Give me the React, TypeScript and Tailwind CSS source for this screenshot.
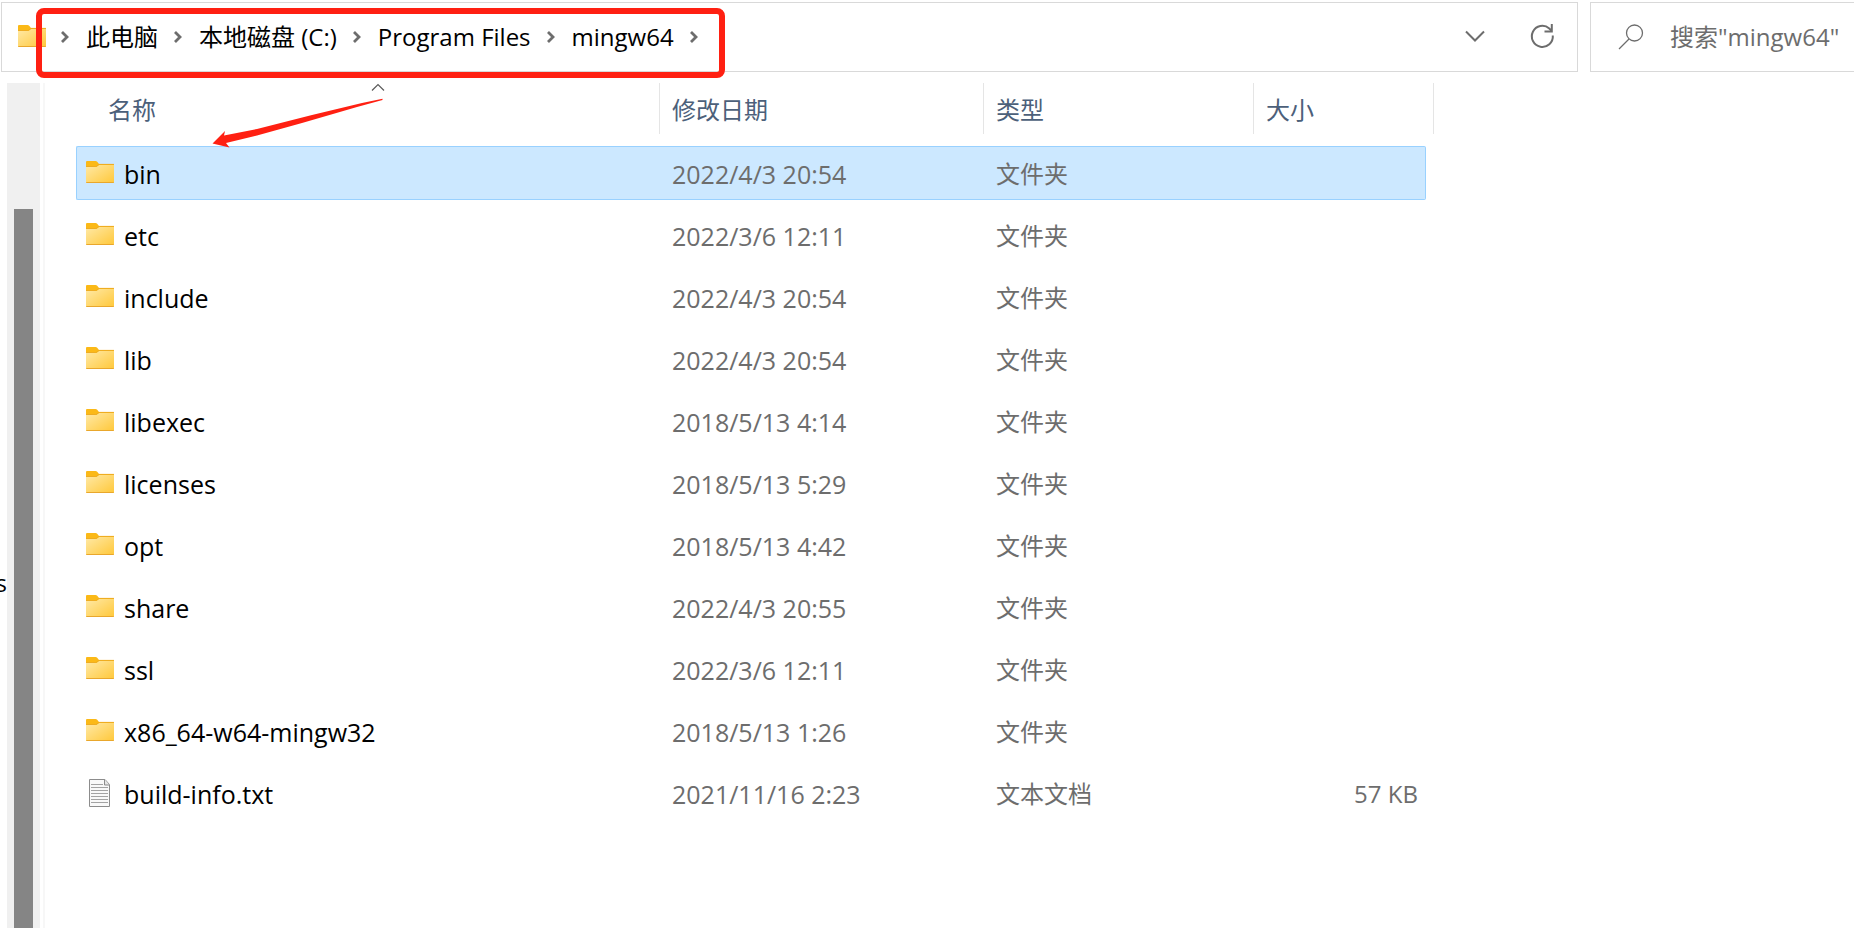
import { useState } from "react";
import clsx from "clsx";

type Entry = {
  name: string;
  modified: string;
  kind: "folder" | "text";
  size?: string;
};

const CRUMBS = ["此电脑", "本地磁盘 (C:)", "Program Files", "mingw64"];

const ENTRIES: Entry[] = [
  { name: "bin", modified: "2022/4/3 20:54", kind: "folder" },
  { name: "etc", modified: "2022/3/6 12:11", kind: "folder" },
  { name: "include", modified: "2022/4/3 20:54", kind: "folder" },
  { name: "lib", modified: "2022/4/3 20:54", kind: "folder" },
  { name: "libexec", modified: "2018/5/13 4:14", kind: "folder" },
  { name: "licenses", modified: "2018/5/13 5:29", kind: "folder" },
  { name: "opt", modified: "2018/5/13 4:42", kind: "folder" },
  { name: "share", modified: "2022/4/3 20:55", kind: "folder" },
  { name: "ssl", modified: "2022/3/6 12:11", kind: "folder" },
  { name: "x86_64-w64-mingw32", modified: "2018/5/13 1:26", kind: "folder" },
  { name: "build-info.txt", modified: "2021/11/16 2:23", kind: "text", size: "57 KB" },
];

const FolderIcon = () => (
  <svg width="28" height="24" viewBox="0 1 28 24" className="shrink-0" aria-hidden="true">
    <defs>
      <linearGradient id="folder-front" x1="0" y1="0" x2="1" y2="1">
        <stop offset="0" stopColor="#ffe9a6" />
        <stop offset="1" stopColor="#ffc83a" />
      </linearGradient>
    </defs>
    <path d="M0 2a1 1 0 0 1 1-1h8.500q1 0 1.700.8L13 4h14a1 1 0 0 1 1 1v8H0z" fill="#fbb917" />
    <path d="M0 7h10.500L13 5h15v17a1 1 0 0 1-1 1H1a1 1 0 0 1-1-1z" fill="url(#folder-front)" />
    <path d="M0 22a1 1 0 0 0 1 1h26a1 1 0 0 0 1-1z" fill="#e9a72c" />
    <path d="M0 6.500h9.500q1 0 1.700-.7L13 4.400h15" fill="none" stroke="#eeac22" />
  </svg>
);

const TextFileIcon = () => (
  <svg width="28" height="28" viewBox="0 0 28 28" className="shrink-0" aria-hidden="true">
    <path d="M3.500.5H19L23.500 5.500v22h-20z" fill="#f9f9f9" stroke="#8c8c8c" />
    <path d="M18.500.5v5.500h5" fill="#e6e6e6" stroke="#8c8c8c" />
    <path
      d="M5 5.500h12M5 8.500h17M5 11.500h17M5 14.500h17M5 17.500h17M5 20.500h17M5 23.500h17"
      stroke="#a3a3a3"
    />
  </svg>
);

const CrumbChevron = () => (
  <svg width="8" height="12" viewBox="0 0 8 12" className="shrink-0" aria-hidden="true">
    <path d="M1 1l5 5-5 5" fill="none" stroke="#6d6d6d" strokeWidth="2.800" />
  </svg>
);

const AddressBar = () => (
  <div className="flex min-w-0 flex-1 items-center border border-[#d9d9d9] pr-[22px]">
    <nav aria-label="路径" className="relative flex h-full items-center gap-[17px] pl-4">
      <div className="flex items-center gap-[15px]">
        <FolderIcon />
        <CrumbChevron />
      </div>
      {CRUMBS.map((crumb) => (
        <div key={crumb} className="flex items-center gap-4">
          <button type="button" className="whitespace-nowrap text-black">
            {crumb}
          </button>
          <CrumbChevron />
        </div>
      ))}
      {/* highlight around the path */}
      <span className="pointer-events-none absolute -right-[27px] -bottom-[7px] left-[34px] top-[5px] rounded-lg border-[6px] border-[#ff2012]" />
    </nav>
    <div className="ml-auto flex items-center gap-[42px] pb-[3px]">
      <button type="button" aria-label="以前的位置">
        <svg width="24" height="24" viewBox="0 0 24 24" fill="none" stroke="#6d6d6d" strokeWidth="2">
          <path d="M3 7.500l9 9 9-9" />
        </svg>
      </button>
      <button type="button" aria-label="刷新">
        <svg width="26" height="26" viewBox="0 0 26 26" fill="none" stroke="#6d6d6d" strokeWidth="2">
          <path d="M23.800 12.500A10.500 10.500 0 1 1 20.300 5.500L22.500 7.800" />
          <path d="M22.800 1v7.500H15.500" />
        </svg>
      </button>
    </div>
  </div>
);

const SearchBox = () => (
  <label className="flex w-[264px] shrink-0 items-center gap-[26px] border border-r-0 border-[#d9d9d9] pl-[27px]">
    <svg width="26" height="26" viewBox="0 0 26 26" fill="none" stroke="#6d6d6d" className="shrink-0">
      <circle cx="16.500" cy="9" r="8" strokeWidth="1.300" />
      <path d="M11 15L1 25" strokeWidth="1.300" />
    </svg>
    <input
      type="text"
      aria-label="搜索"
      placeholder={'搜索"mingw64"'}
      className="w-full min-w-0 outline-none placeholder:text-[#6d6d6d]"
    />
  </label>
);

const NavScrollbar = () => (
  <div className="flex shrink-0">
    <div className="flex w-[7px] justify-end overflow-hidden pt-[484px]">
      <span className="leading-8 text-black">s</span>
    </div>
    <div className="flex w-[33px] justify-center bg-[#f0f0f0] pt-[126px]">
      <div className="w-[19px] bg-[#858585]" />
    </div>
    <div className="ml-[3px] w-[2px] bg-[#f7f7f7]" />
  </div>
);

const HeaderCell = ({ label, divider = true }: { label: string; divider?: boolean }) => (
  <th scope="col" className="p-0 pb-2 font-normal">
    <button
      type="button"
      className={clsx(
        "flex h-[51px] w-full items-center pt-[2px] pl-3 text-left text-[#4c607a]",
        divider && "border-r border-[#e5e5e5]"
      )}
    >
      {label}
    </button>
  </th>
);

const FileRow = ({
  entry,
  selected,
  onSelect,
}: {
  entry: Entry;
  selected: boolean;
  onSelect: () => void;
}) => {
  const cell = clsx(
    "flex h-[54px] items-center border-y",
    selected ? "border-[#99d1ff] bg-[#cce8ff]" : "border-transparent"
  );

  return (
    <tr onClick={onSelect} aria-selected={selected}>
      <td className="p-0 py-1">
        <div className={clsx(cell, "rounded-l-xs border-l pl-[9px]")}>
          <button type="button" className="flex items-center gap-[10px] text-[25px] leading-8 text-black">
            {entry.kind === "folder" ? <FolderIcon /> : <TextFileIcon />}
            <span className="pt-[2px]">{entry.name}</span>
          </button>
        </div>
      </td>
      <td className="p-0 py-1">
        <div className={clsx(cell, "pt-[2px] pl-3 text-[25px] leading-8")}>{entry.modified}</div>
      </td>
      <td className="p-0 py-1">
        <div className={clsx(cell, "pt-[2px] pl-3")}>
          {entry.kind === "folder" ? "文件夹" : "文本文档"}
        </div>
      </td>
      <td className="p-0 py-1">
        <div className={clsx(cell, "justify-end rounded-r-xs border-r pt-[2px] pr-[7px]")}>
          {entry.size}
        </div>
      </td>
    </tr>
  );
};

const FileTable = () => {
  const [selected, setSelected] = useState("bin");

  return (
    <table className="w-[1358px] table-fixed border-separate border-spacing-0 text-left text-[#6d6d6d]">
      <colgroup>
        <col className="w-[584px]" />
        <col className="w-[324px]" />
        <col className="w-[270px]" />
        <col className="w-[172px]" />
        <col className="w-2" />
      </colgroup>
      <thead>
        <tr>
          <th scope="col" aria-sort="ascending" className="p-0 pb-2 pl-5 font-normal">
            <button
              type="button"
              className="relative flex h-[51px] w-full items-center border-r border-[#e5e5e5] pt-[2px] pl-3 text-left text-[#4c607a]"
            >
              名称
              <svg
                width="14"
                height="8"
                viewBox="0 0 14 8"
                className="absolute inset-x-0 top-0 mx-auto"
                aria-hidden="true"
              >
                <path d="M1 7.500l6-6 6 6" fill="none" stroke="#5a5a5a" strokeWidth="1.200" />
              </svg>
            </button>
          </th>
          <HeaderCell label="修改日期" />
          <HeaderCell label="类型" />
          <HeaderCell label="大小" divider={false} />
          <td className="p-0 pb-2">
            <div className="h-[51px] border-r border-[#e5e5e5]" />
          </td>
        </tr>
      </thead>
      <tbody>
        {ENTRIES.map((entry) => (
          <FileRow
            key={entry.name}
            entry={entry}
            selected={entry.name === selected}
            onSelect={() => setSelected(entry.name)}
          />
        ))}
      </tbody>
    </table>
  );
};

export default function App() {
  return (
    <div className="flex min-h-screen flex-col overflow-hidden bg-white pt-[2px] font-['Open_Sans','Noto_Sans_CJK_SC',sans-serif] text-[24px] leading-8 text-[#6d6d6d]">
      <header className="flex h-[70px] gap-3 pl-px">
        <AddressBar />
        <SearchBox />
      </header>
      <div className="mt-[11px] flex flex-1">
        <NavScrollbar />
        <main className="relative flex-1 pl-[31px]">
          <FileTable />
          {/* arrow pointing at the bin folder */}
          <svg
            width="172"
            height="52"
            viewBox="0 0 172 52"
            className="pointer-events-none absolute left-[167px] top-[15px]"
            aria-hidden="true"
          >
            <path
              d="M.5 45.500L13 33L12 37.500L45 31L100 17L150 5L170.500.8L170.500 2L145 9L90 25L45 37.500L14 45L17.500 49.500Z"
              fill="#ff2012"
            />
          </svg>
        </main>
      </div>
    </div>
  );
}
